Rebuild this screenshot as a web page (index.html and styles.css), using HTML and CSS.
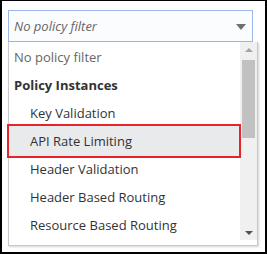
FILE: index.html
```html
<!DOCTYPE html>
<html>
<head>
<meta charset="utf-8">
<link rel="stylesheet" href="styles.css">
</head>
<body>
<div class="frame">
  <div class="select">
    <span class="placeholder">No policy filter</span>
    <span class="caret"></span>
  </div>
  <div class="dropdown">
    <ul class="options">
      <li class="opt empty">No policy filter</li>
      <li class="opt group">Policy Instances</li>
      <li class="opt item">Key Validation</li>
      <li class="opt item active"><span>API Rate Limiting</span></li>
      <li class="opt item">Header Validation</li>
      <li class="opt item">Header Based Routing</li>
      <li class="opt item">Resource Based Routing</li>
    </ul>
    <div class="scrollbar">
      <span class="arrow up"></span>
      <span class="thumb"></span>
      <span class="spacer"></span>
      <span class="arrow down"></span>
    </div>
  </div>
</div>
</body>
</html>
```
FILE: styles.css
```css
html, body {
  margin: 0;
  padding: 0;
  background: #fff;
}
.frame {
  width: 267px;
  height: 254px;
  box-sizing: border-box;
  border: solid #000;
  border-width: 1px 2px 2px 2px;
  padding: 9px 0 0 6px;
  font-family: "Open Sans", "Noto Sans", sans-serif;
  font-size: 13px;
  color: #333;
}
.select {
  width: 245px;
  height: 32px;
  box-sizing: border-box;
  border: 1px solid #9ab8ea;
  background: #fbfcfe;
  display: flex;
  align-items: center;
  justify-content: space-between;
  padding: 0 6px 0 5px;
}
.placeholder {
  font-style: italic;
  color: #666;
}
.caret {
  width: 0;
  height: 0;
  border-left: 5px solid transparent;
  border-right: 5px solid transparent;
  border-top: 6px solid #707070;
  margin-top: 2px;
}
.dropdown {
  width: 250px;
  height: 204px;
  box-sizing: border-box;
  border: 1px solid #c9c9c9;
  border-top: none;
  box-shadow: 1px 1px 2px rgba(0,0,0,0.18);
  display: flex;
  background: #fff;
}
.options {
  list-style: none;
  margin: 0;
  padding: 1px 0 0 0;
  flex: 1;
}
.opt {
  height: 28px;
  line-height: 28px;
  white-space: nowrap;
}
.empty {
  padding-left: 5px;
  color: #666;
}
.group {
  padding-left: 5px;
  font-weight: bold;
  color: #333;
}
.item {
  padding-left: 21px;
}
.active {
  position: relative;
}
.active::before {
  content: "";
  position: absolute;
  top: -3px;
  bottom: -3px;
  left: -2px;
  right: -1px;
  border: 2px solid #e5232b;
  background: #e9eaec;
}
.active span {
  position: relative;
}
.scrollbar {
  width: 17px;
  height: 198px;
  background: #f0f0f0;
  display: flex;
  flex-direction: column;
  align-items: center;
}
.arrow {
  width: 0;
  height: 0;
  border-left: 4px solid transparent;
  border-right: 4px solid transparent;
}
.arrow.up {
  border-bottom: 4px solid #a3a3a3;
  margin-top: 6px;
}
.arrow.down {
  border-top: 4px solid #505050;
  margin-bottom: 5px;
}
.thumb {
  width: 13px;
  height: 78px;
  background: #c1c1c1;
  margin-top: 8px;
}
.spacer {
  flex: 1;
}
```
